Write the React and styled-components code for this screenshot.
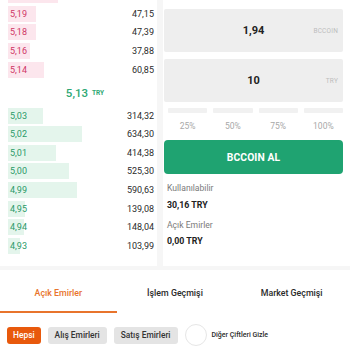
import React from "react";
import styled, { createGlobalStyle } from "styled-components";

const GlobalStyle = createGlobalStyle`
  html, body { margin: 0; padding: 0; background: #ffffff; }
  body { font-family: Roboto, "Noto Sans", "Liberation Sans", sans-serif; }
  * { box-sizing: border-box; }
`;

const Page = styled.div`
  width: 350px;
  height: 350px;
  overflow: hidden;
  background: #ffffff;
`;

const TopSection = styled.div`
  display: grid;
  grid-template-columns: 157px 1fr;
  gap: 6px;
  height: 270px;
  padding-bottom: 4px;
  background: #f6f6f6;
`;

const BookPanel = styled.div`
  background: #ffffff;
  overflow: hidden;
`;

const BookList = styled.div`
  margin-top: -14px;
  padding: 0 3px 0 8px;
`;

const Row = styled.div`
  position: relative;
  height: 18.6px;
  display: flex;
  align-items: center;
  justify-content: space-between;
  font-size: 9px;
`;

const DepthBar = styled.div`
  position: absolute;
  left: 0;
  top: 1.3px;
  height: 16px;
  background: ${(p) => (p.$side === "sell" ? "#fce6ed" : "#e4f5ec")};
`;

const Price = styled.span`
  position: relative;
  padding-left: 2px;
  color: ${(p) => (p.$side === "sell" ? "#cf3565" : "#2a9a68")};
`;

const Amount = styled.span`
  position: relative;
  color: #2b2b2b;
`;

const MidRow = styled.div`
  height: 27.4px;
  display: flex;
  align-items: center;
  justify-content: center;
  gap: 4px;
  padding-left: 8px;
  color: #2fa874;
`;

const MidPrice = styled.span`
  font-size: 11.5px;
  font-weight: 500;
`;

const MidUnit = styled.span`
  font-size: 6.5px;
  font-weight: 700;
  margin-top: 1px;
`;

const OrderPanel = styled.div`
  background: #ffffff;
  padding: 9px 7px 0 1px;
  display: flex;
  flex-direction: column;
`;

const InputBox = styled.div`
  height: 43px;
  background: #eeeeee;
  border-radius: 2px;
  display: grid;
  grid-template-columns: 1fr auto 1fr;
  align-items: center;
  margin-bottom: ${(p) => p.$gap || 0}px;
`;

const InputValue = styled.span`
  grid-column: 2;
  font-size: 11px;
  font-weight: 700;
  color: #222222;
`;

const InputUnit = styled.span`
  grid-column: 3;
  justify-self: end;
  padding-right: 5px;
  font-size: 6.5px;
  color: #bdbdbd;
  letter-spacing: 0.2px;
`;

const PercentRow = styled.div`
  display: grid;
  grid-template-columns: repeat(4, 1fr);
  gap: 6px;
  margin-top: 6px;
  padding-left: 4px;
`;

const PercentCell = styled.div`
  display: flex;
  flex-direction: column;
  align-items: center;
`;

const PercentBar = styled.div`
  width: 100%;
  height: 5px;
  background: #f1f1f1;
  border-radius: 1px;
`;

const PercentLabel = styled.span`
  margin-top: 8px;
  line-height: 10px;
  font-size: 8.5px;
  color: #a8a8a8;
`;

const BuyButton = styled.button`
  margin-top: 9px;
  height: 34px;
  border: none;
  border-radius: 4px;
  background: #1fa371;
  color: #ffffff;
  font-family: inherit;
  font-size: 10.3px;
  font-weight: 700;
  letter-spacing: 0.1px;
`;

const InfoLabel = styled.div`
  margin-top: ${(p) => p.$top}px;
  padding-left: 3px;
  line-height: 12px;
  font-size: 8.6px;
  color: #7a7a7a;
`;

const InfoValue = styled.div`
  margin-top: ${(p) => p.$top}px;
  padding-left: 3px;
  line-height: 12px;
  font-size: 8.8px;
  font-weight: 700;
  color: #222222;
`;

const Tabs = styled.div`
  display: grid;
  grid-template-columns: repeat(3, 1fr);
  height: 43px;
`;

const Tab = styled.div`
  display: flex;
  align-items: center;
  justify-content: center;
  padding-top: 5px;
  font-size: 8.8px;
  font-weight: 500;
  color: ${(p) => (p.$active ? "#e8742c" : "#2a2a2a")};
  border-bottom: 2px solid ${(p) => (p.$active ? "#e8742c" : "transparent")};
`;

const FilterRow = styled.div`
  display: flex;
  align-items: center;
  gap: 7px;
  padding: 11px 0 0 7px;
`;

const FilterButton = styled.div`
  height: 17px;
  padding: 0 ${(p) => p.$pad}px;
  display: flex;
  align-items: center;
  border-radius: 3px;
  font-size: 8.4px;
  font-weight: 500;
  background: ${(p) => (p.$active ? "#e8590c" : "#e4e4e4")};
  color: ${(p) => (p.$active ? "#ffffff" : "#333333")};
`;

const Toggle = styled.label`
  display: flex;
  align-items: center;
  gap: 5px;
  font-size: 7px;
  font-weight: 500;
  color: #2a2a2a;
`;

const Circle = styled.span`
  width: 22px;
  height: 22px;
  border-radius: 50%;
  border: 1px solid #e6e6e6;
  background: #ffffff;
`;

const sells = [
  { p: "5,19", a: "47,15", w: 28 },
  { p: "5,18", a: "47,39", w: 28 },
  { p: "5,16", a: "37,88", w: 22 },
  { p: "5,14", a: "60,85", w: 36 },
];

const buys = [
  { p: "5,03", a: "314,32", w: 35 },
  { p: "5,02", a: "634,30", w: 74 },
  { p: "5,01", a: "414,38", w: 48 },
  { p: "5,00", a: "525,30", w: 61 },
  { p: "4,99", a: "590,63", w: 69 },
  { p: "4,95", a: "139,08", w: 17 },
  { p: "4,94", a: "148,04", w: 16 },
  { p: "4,93", a: "103,99", w: 12 },
];

function BookRow({ side, p, a, w }) {
  return (
    <Row>
      <DepthBar $side={side} style={{ width: `${w}px` }} />
      {p && <Price $side={side}>{p}</Price>}
      {a && <Amount>{a}</Amount>}
    </Row>
  );
}

export default function App() {
  return (
    <Page>
      <GlobalStyle />
      <TopSection>
        <BookPanel>
          <BookList>
            <BookRow side="sell" w={50} />
            {sells.map((r) => (
              <BookRow key={r.p} side="sell" {...r} />
            ))}
            <MidRow>
              <MidPrice>5,13</MidPrice>
              <MidUnit>TRY</MidUnit>
            </MidRow>
            {buys.map((r) => (
              <BookRow key={r.p} side="buy" {...r} />
            ))}
          </BookList>
        </BookPanel>
        <OrderPanel>
          <InputBox $gap={7}>
            <InputValue>1,94</InputValue>
            <InputUnit>BCCOIN</InputUnit>
          </InputBox>
          <InputBox>
            <InputValue>10</InputValue>
            <InputUnit>TRY</InputUnit>
          </InputBox>
          <PercentRow>
            {["25%", "50%", "75%", "100%"].map((t) => (
              <PercentCell key={t}>
                <PercentBar />
                <PercentLabel>{t}</PercentLabel>
              </PercentCell>
            ))}
          </PercentRow>
          <BuyButton>BCCOIN AL</BuyButton>
          <InfoLabel $top={8}>Kullanılabilir</InfoLabel>
          <InfoValue $top={5}>30,16 TRY</InfoValue>
          <InfoLabel $top={8}>Açık Emirler</InfoLabel>
          <InfoValue $top={4}>0,00 TRY</InfoValue>
        </OrderPanel>
      </TopSection>
      <Tabs>
        <Tab $active>Açık Emirler</Tab>
        <Tab>İşlem Geçmişi</Tab>
        <Tab>Market Geçmişi</Tab>
      </Tabs>
      <FilterRow>
        <FilterButton $active $pad={6}>Hepsi</FilterButton>
        <FilterButton $pad={7}>Alış Emirleri</FilterButton>
        <FilterButton $pad={7}>Satış Emirleri</FilterButton>
        <Toggle>
          <Circle />
          Diğer Çiftleri Gizle
        </Toggle>
      </FilterRow>
    </Page>
  );
}
